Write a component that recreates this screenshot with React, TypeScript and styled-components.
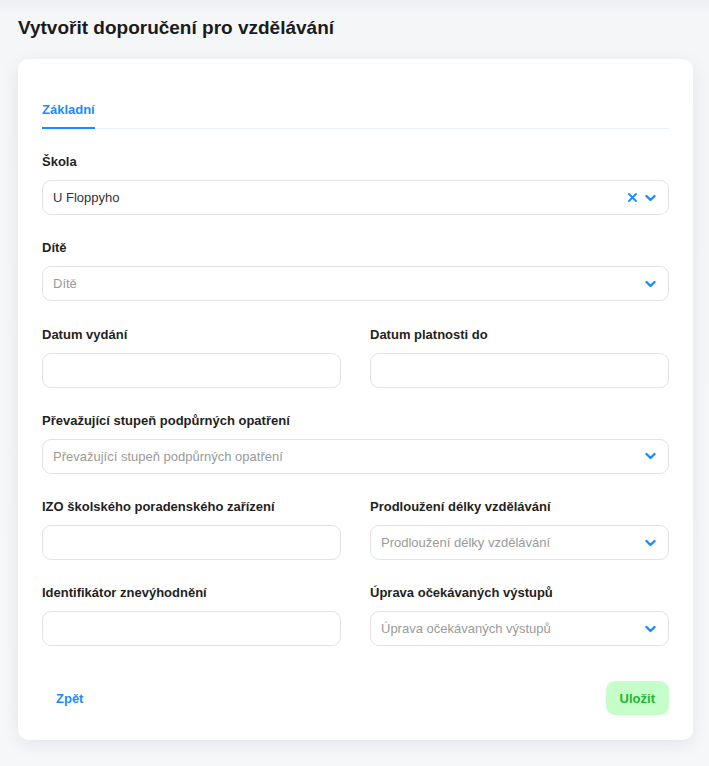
import React from "react";
import styled, { createGlobalStyle } from "styled-components";

const Global = createGlobalStyle`
  html, body { margin: 0; padding: 0; }
  body {
    background: #f4f5f7;
    font-family: "Liberation Sans", Arial, sans-serif;
    min-height: 766px;
  }
  * { box-sizing: border-box; }
`;

const Page = styled.div`
  min-height: 766px;
  padding: 17px 16px 26px 18px;
  background: linear-gradient(180deg, #eceef1 0px, #f5f6f8 14px, #f6f7f9 100%);
`;

const Title = styled.h1`
  margin: 0 0 20px 0;
  font-size: 19px;
  line-height: 22px;
  font-weight: 700;
  color: #1b1b1b;
`;

const Card = styled.div`
  background: #ffffff;
  border-radius: 10px;
  box-shadow: 0 4px 18px rgba(30, 30, 50, 0.08);
  padding: 43px 24px 25px 24px;
`;

const TabList = styled.div`
  display: flex;
  border-bottom: 1px solid #e4f0fb;
  margin-bottom: 25px;
`;

const Tab = styled.div<{ $active?: boolean }>`
  font-size: 13px;
  line-height: 16px;
  font-weight: 700;
  color: ${(p) => (p.$active ? "#1a8cff" : "#555")};
  padding: 0 0 9px 0;
  border-bottom: 2px solid ${(p) => (p.$active ? "#1a8cff" : "transparent")};
  margin-bottom: -1px;
`;

const Form = styled.div`
  display: flex;
  flex-direction: column;
  gap: 25.25px;
`;

const Row = styled.div`
  display: grid;
  grid-template-columns: 1fr 1fr;
  column-gap: 29px;
`;

const Field = styled.div`
  display: flex;
  flex-direction: column;
  gap: 10px;
`;

const Label = styled.div`
  font-size: 13px;
  line-height: 16px;
  font-weight: 700;
  color: #1f1f1f;
`;

const Box = styled.div`
  height: 35px;
  border: 1px solid #e2e2e2;
  border-radius: 9px;
  background: #fff;
  display: flex;
  align-items: center;
  padding: 0 12px 0 10px;
  gap: 10px;
`;

const Value = styled.div<{ $placeholder?: boolean }>`
  flex: 1;
  font-size: 13px;
  color: ${(p) => (p.$placeholder ? "#9a9a9a" : "#333")};
  white-space: nowrap;
  overflow: hidden;
`;

const Icons = styled.div`
  display: flex;
  align-items: center;
  gap: 8px;
`;

const Footer = styled.div`
  display: flex;
  justify-content: space-between;
  align-items: center;
  margin-top: 35px;
`;

const Button = styled.button<{ $variant: "link" | "save" }>`
  height: 34px;
  padding: 0 14px;
  border: none;
  border-radius: 9px;
  font-family: "Liberation Sans", Arial, sans-serif;
  font-size: 13px;
  font-weight: 700;
  cursor: pointer;
  background: ${(p) => (p.$variant === "save" ? "#c5fec8" : "transparent")};
  color: ${(p) => (p.$variant === "save" ? "#1fb536" : "#1a8cff")};
`;

const Chevron = () => (
  <svg width="11" height="8" viewBox="0 0 11 8">
    <path d="M1.5 2 L5.5 6 L9.5 2" fill="none" stroke="#1a8cff" strokeWidth="2.4" strokeLinecap="round" strokeLinejoin="round" />
  </svg>
);

const Cross = () => (
  <svg width="9" height="9" viewBox="0 0 9 9">
    <path d="M1 1 L8 8 M8 1 L1 8" fill="none" stroke="#1a8cff" strokeWidth="1.8" strokeLinecap="round" />
  </svg>
);

const Select = ({ value, placeholder, clearable }: { value?: string; placeholder: string; clearable?: boolean }) => (
  <Box>
    <Value $placeholder={!value}>{value || placeholder}</Value>
    <Icons>
      {clearable && <Cross />}
      <Chevron />
    </Icons>
  </Box>
);

const Input = () => <Box />;

export default function App() {
  return (
    <>
      <Global />
      <Page>
        <Title>Vytvořit doporučení pro vzdělávání</Title>
        <Card>
          <TabList>
            <Tab $active>Základní</Tab>
          </TabList>
          <Form>
            <Field>
              <Label>Škola</Label>
              <Select value="U Floppyho" placeholder="Škola" clearable />
            </Field>
            <Field>
              <Label>Dítě</Label>
              <Select placeholder="Dítě" />
            </Field>
            <Row>
              <Field>
                <Label>Datum vydání</Label>
                <Input />
              </Field>
              <Field>
                <Label>Datum platnosti do</Label>
                <Input />
              </Field>
            </Row>
            <Field>
              <Label>Převažující stupeň podpůrných opatření</Label>
              <Select placeholder="Převažující stupeň podpůrných opatření" />
            </Field>
            <Row>
              <Field>
                <Label>IZO školského poradenského zařízení</Label>
                <Input />
              </Field>
              <Field>
                <Label>Prodloužení délky vzdělávání</Label>
                <Select placeholder="Prodloužení délky vzdělávání" />
              </Field>
            </Row>
            <Row>
              <Field>
                <Label>Identifikátor znevýhodnění</Label>
                <Input />
              </Field>
              <Field>
                <Label>Úprava očekávaných výstupů</Label>
                <Select placeholder="Úprava očekávaných výstupů" />
              </Field>
            </Row>
          </Form>
          <Footer>
            <Button $variant="link">Zpět</Button>
            <Button $variant="save">Uložit</Button>
          </Footer>
        </Card>
      </Page>
    </>
  );
}
